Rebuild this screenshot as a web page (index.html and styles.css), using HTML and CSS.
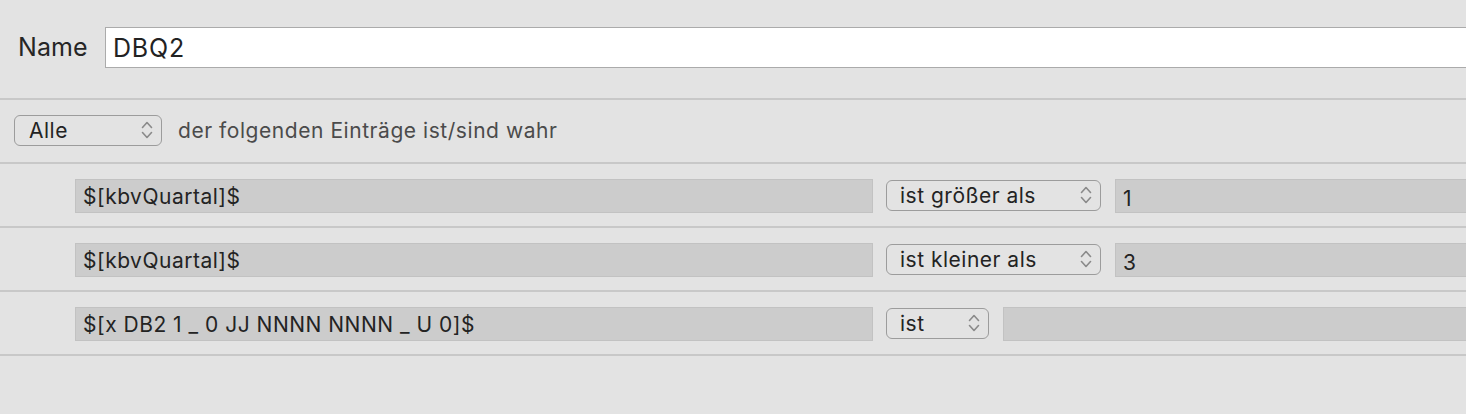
FILE: index.html
```html
<!DOCTYPE html>
<html lang="de">
<head>
<meta charset="utf-8">
<title>DBQ2</title>
<link rel="stylesheet" href="styles.css">
</head>
<body>
<div class="page">
  <div class="name-row">
    <label class="name-label">Name</label>
    <div class="name-input">DBQ2</div>
  </div>
  <div class="sep"></div>
  <div class="header-row">
    <div class="popup popup-alle">
      <span class="popup-text">Alle</span>
      <svg class="chev" width="12" height="20" viewBox="0 0 12 20"><path d="M1.5 7.5 L6 2.5 L10.5 7.5 M1.5 12.5 L6 17.5 L10.5 12.5" fill="none" stroke="#8a8a8a" stroke-width="1.6" stroke-linecap="round" stroke-linejoin="round"/></svg>
    </div>
    <span class="header-text">der folgenden Einträge ist/sind wahr</span>
  </div>
  <div class="sep"></div>
  <div class="crit-row">
    <div class="field field-left">$[kbvQuartal]$</div>
    <div class="popup popup-op">
      <span class="popup-text">ist größer als</span>
      <svg class="chev" width="12" height="20" viewBox="0 0 12 20"><path d="M1.5 7.5 L6 2.5 L10.5 7.5 M1.5 12.5 L6 17.5 L10.5 12.5" fill="none" stroke="#8a8a8a" stroke-width="1.6" stroke-linecap="round" stroke-linejoin="round"/></svg>
    </div>
    <div class="field field-value">1</div>
  </div>
  <div class="sep"></div>
  <div class="crit-row">
    <div class="field field-left">$[kbvQuartal]$</div>
    <div class="popup popup-op">
      <span class="popup-text">ist kleiner als</span>
      <svg class="chev" width="12" height="20" viewBox="0 0 12 20"><path d="M1.5 7.5 L6 2.5 L10.5 7.5 M1.5 12.5 L6 17.5 L10.5 12.5" fill="none" stroke="#8a8a8a" stroke-width="1.6" stroke-linecap="round" stroke-linejoin="round"/></svg>
    </div>
    <div class="field field-value">3</div>
  </div>
  <div class="sep"></div>
  <div class="crit-row">
    <div class="field field-left">$[x DB2 1 _ 0 JJ NNNN NNNN _ U 0]$</div>
    <div class="popup popup-short">
      <span class="popup-text">ist</span>
      <svg class="chev" width="12" height="20" viewBox="0 0 12 20"><path d="M1.5 7.5 L6 2.5 L10.5 7.5 M1.5 12.5 L6 17.5 L10.5 12.5" fill="none" stroke="#8a8a8a" stroke-width="1.6" stroke-linecap="round" stroke-linejoin="round"/></svg>
    </div>
    <div class="field field-value"></div>
  </div>
  <div class="sep"></div>
</div>
</body>
</html>
```
FILE: styles.css
```css
html, body {
  margin: 0;
  padding: 0;
  background: #e3e3e3;
  overflow: hidden;
}
.page {
  width: 1466px;
  height: 414px;
  overflow: hidden;
  font-family: Inter, "Liberation Sans", sans-serif;
  color: #232323;
}
.name-row {
  height: 98px;
  display: flex;
  align-items: flex-start;
  padding-top: 27px;
  box-sizing: border-box;
}
.name-label {
  width: 87px;
  padding-left: 18px;
  font-size: 25px;
  letter-spacing: 0.1px;
  line-height: 41px;
  color: #262626;
}
.name-input {
  flex: 1;
  margin-right: -20px;
  height: 41px;
  box-sizing: border-box;
  border: 1px solid #ababab;
  background: #ffffff;
  font-size: 25px;
  letter-spacing: 0.8px;
  line-height: 41px;
  padding-left: 7px;
  color: #222;
}
.sep {
  height: 2px;
  background: #c8c8c8;
}
.header-row {
  height: 62px;
  display: flex;
  align-items: center;
  padding-left: 14px;
  gap: 16px;
  padding-bottom: 2px;
  box-sizing: border-box;
}
.header-text {
  font-size: 21px;
  letter-spacing: 0.55px;
  color: #4b4b4b;
}
.popup {
  height: 31px;
  box-sizing: border-box;
  border: 1.5px solid #9c9c9c;
  border-radius: 6px;
  display: flex;
  align-items: center;
  justify-content: space-between;
  padding: 0 8px 0 13px;
  font-size: 21px;
  letter-spacing: 0.5px;
  color: #232323;
}
.popup-alle { width: 148px; padding-left: 14px; }
.popup-op { width: 215px; }
.popup-short { width: 103px; }
.chev { display: block; }
.crit-row {
  height: 62px;
  display: flex;
  align-items: center;
  padding-left: 75px;
  gap: 13px;
}
.field {
  height: 34px;
  box-sizing: border-box;
  background: #cccccc;
  border: 1px solid #c2c2c2;
  font-size: 21px;
  letter-spacing: 0.5px;
  line-height: 34px;
  padding-left: 7px;
  color: #232323;
  margin-top: 1px;
}
.field-left { width: 798px; }
.field-value {
  flex: 1;
  margin-left: 1px;
  margin-right: -20px;
  line-height: 37px;
}
```
